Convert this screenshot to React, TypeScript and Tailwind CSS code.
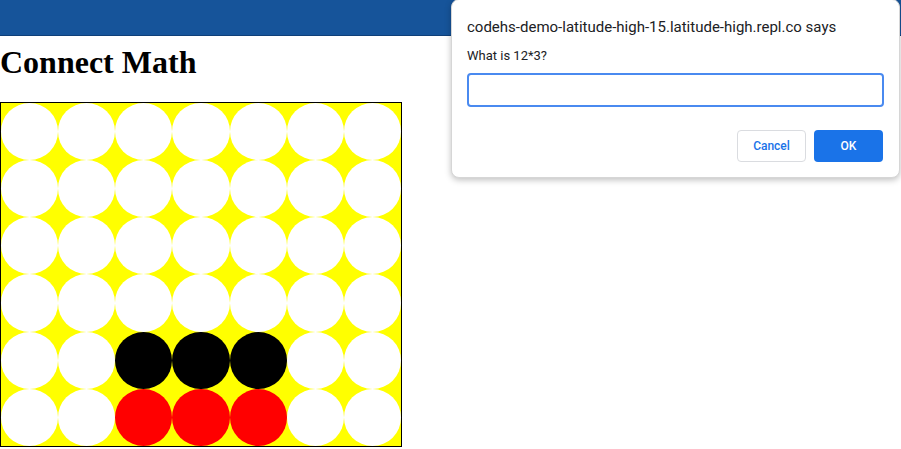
const board: string[][] = [
  ["w", "w", "w", "w", "w", "w", "w"],
  ["w", "w", "w", "w", "w", "w", "w"],
  ["w", "w", "w", "w", "w", "w", "w"],
  ["w", "w", "w", "w", "w", "w", "w"],
  ["w", "w", "b", "b", "b", "w", "w"],
  ["w", "w", "r", "r", "r", "w", "w"],
];

function Cell({ v }: { v: string }) {
  const color = v === "b" ? "bg-black" : v === "r" ? "bg-[#ff0000]" : "bg-white";
  return <div className={`aspect-square rounded-full ${color}`} />;
}

function PromptDialog() {
  return (
    <div className="absolute left-[451px] top-[-1px] h-[179px] w-[449px] rounded-lg border border-[#d6d6d6] bg-white px-[15px] shadow-[0_2px_6px_rgba(0,0,0,0.25)] font-['Roboto',sans-serif]">
      <p className="pt-[17px] text-[15px] leading-[20px] text-[#202124]">
        codehs-demo-latitude-high-15.latitude-high.repl.co says
      </p>
      <p className="mt-[11px] text-[13px] leading-[16px] text-[#202124]">What is 12*3?</p>
      <div className="mt-[9px] h-[34px] w-[417px] rounded-[4px] border-2 border-[#4a8af0]" />
      <div className="mt-[23px] flex justify-end gap-[8px] pr-[1px]">
        <button className="h-[32px] w-[69px] rounded-[4px] border border-[#dadce0] bg-white text-[12px] font-medium text-[#1a73e8]">
          Cancel
        </button>
        <button className="h-[32px] w-[69px] rounded-[4px] bg-[#1a73e8] text-[12px] font-medium text-white">
          OK
        </button>
      </div>
    </div>
  );
}

export default function App() {
  return (
    <div className="relative h-[449px] w-[901px] overflow-hidden bg-white">
      <div className="h-[36px] w-full border-b border-[#0f3f78] bg-[#16549a]" />
      <h1 className="mt-[8px] mb-[21px] text-[32px] font-bold leading-[37px] text-black font-['Liberation_Serif',serif]">
        Connect Math
      </h1>
      <div className="w-[402px] border border-black bg-[#ffff00]">
        <div className="grid grid-cols-7">
          {board.flat().map((v, i) => (
            <Cell key={i} v={v} />
          ))}
        </div>
      </div>
      <PromptDialog />
    </div>
  );
}
